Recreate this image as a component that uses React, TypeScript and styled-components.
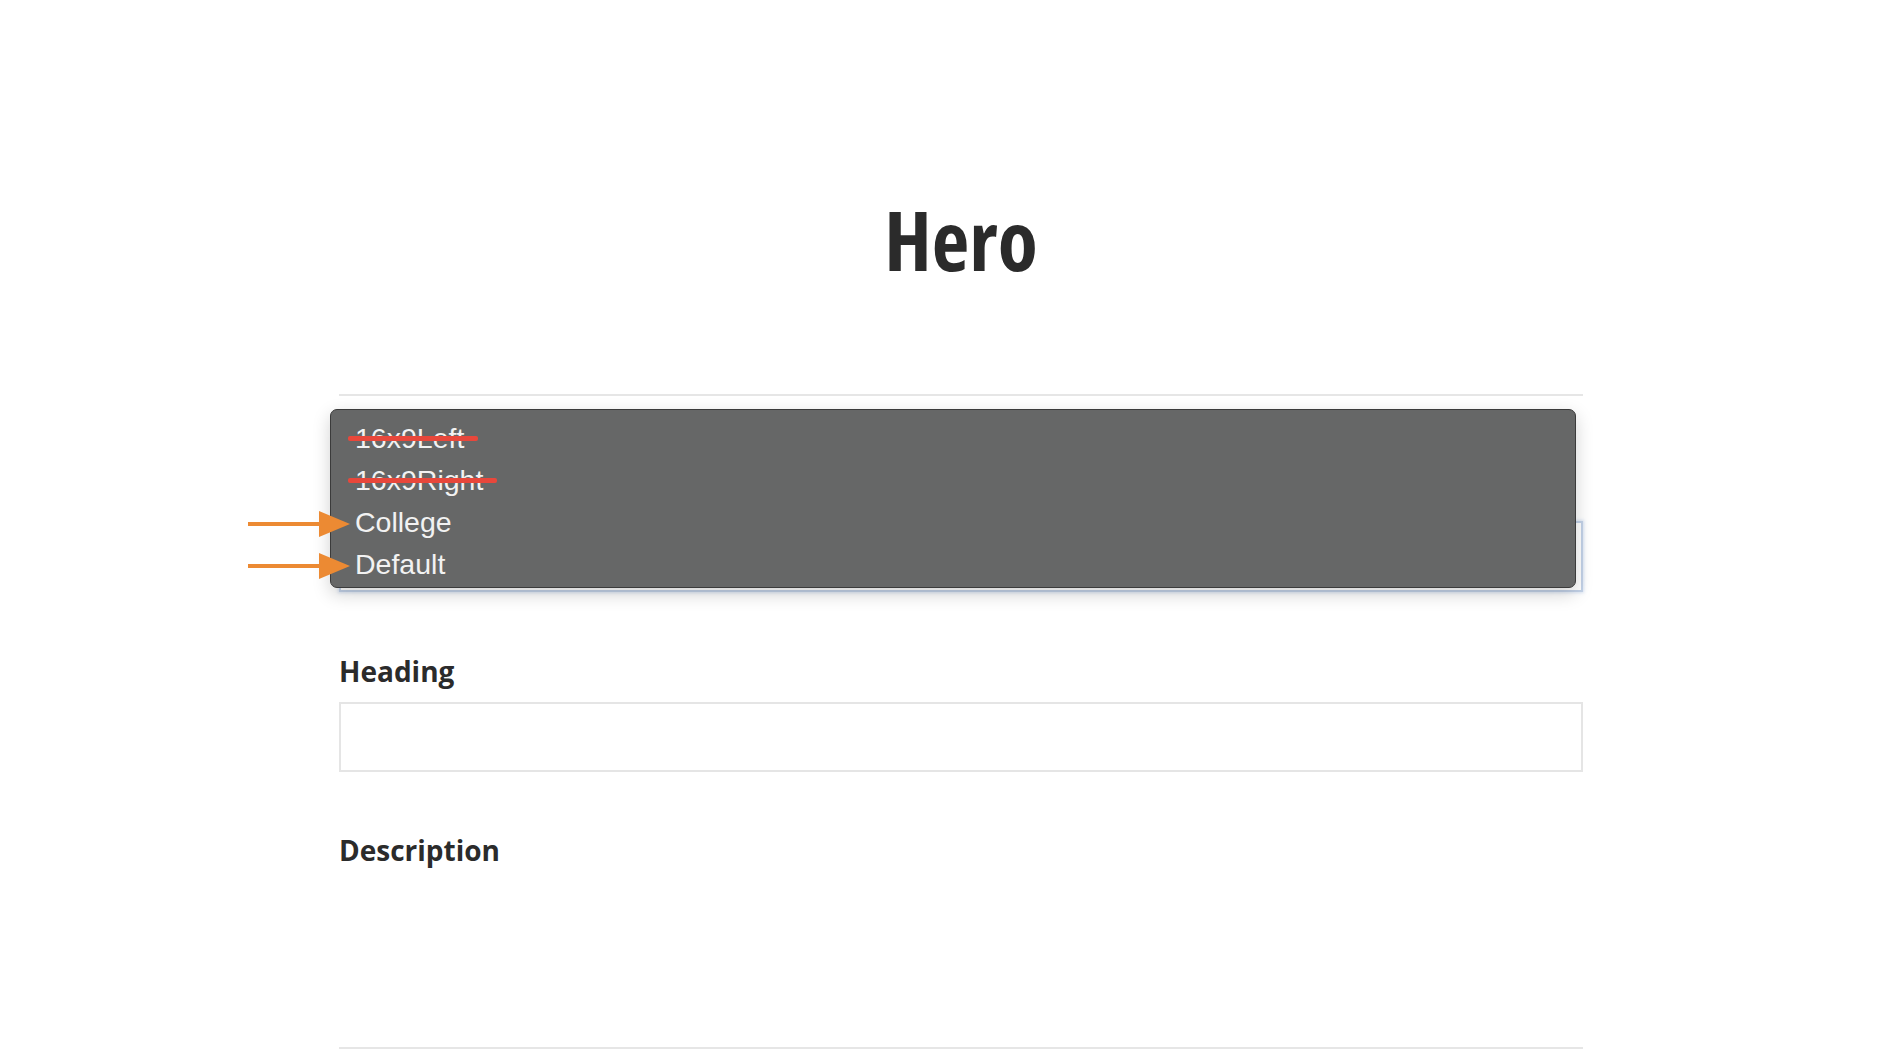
import React from "react";
import styled, { createGlobalStyle } from "styled-components";

const Global = createGlobalStyle`
  html, body { margin: 0; padding: 0; background: #ffffff; }
  body { font-family: "Open Sans", "Liberation Sans", sans-serif; color: #2b2b2b; }
`;

const Page = styled.div`
  padding: 0 313px 0 339px;
  display: flex;
  flex-direction: column;
`;

const Title = styled.h1`
  margin: 198px 0 0;
  height: 82px;
  font-family: "Open Sans", "DejaVu Sans Condensed", sans-serif;
  font-stretch: 75%;
  font-weight: 700;
  font-size: 82px;
  line-height: 1;
  text-align: center;
  color: #2b2b2b;
  letter-spacing: 0;
`;

const Rule = styled.hr<{ $top: number }>`
  margin: ${(p) => p.$top}px 0 0;
  border: none;
  height: 2px;
  background: #e6e6e6;
`;

const SelectField = styled.div`
  position: relative;
  margin-top: 125px;
  height: 71px;
  box-sizing: border-box;
  border: 2px solid #c3d2e8;
  box-shadow: 0 0 3px 1px rgba(170, 195, 230, 0.45);
  background: #fff;
`;

const Popup = styled.ul`
  position: absolute;
  top: -114px;
  left: -11px;
  width: 1246px;
  box-sizing: border-box;
  margin: 0;
  padding: 7px 0 2px;
  list-style: none;
  background: #666767;
  border: 1px solid #3b3b3b;
  border-radius: 7px;
  box-shadow: 0 6px 18px rgba(0, 0, 0, 0.18);
  z-index: 2;
`;

const Option = styled.li`
  position: relative;
  height: 42px;
  padding-left: 24px;
  font-family: "Liberation Sans", Arial, sans-serif;
  font-size: 28.5px;
  line-height: 42px;
  color: #f2f2f2;
`;

const Struck = styled.span<{ $extra: number }>`
  position: relative;
  &::after {
    content: "";
    position: absolute;
    left: -7px;
    right: ${(p) => -p.$extra}px;
    top: 14px;
    height: 5px;
    border-radius: 2px;
    background: #e8473b;
  }
`;

const Arrow = styled.svg`
  position: absolute;
  left: -83px;
  top: 10px;
`;

const Label = styled.label<{ $top: number }>`
  display: block;
  margin-top: ${(p) => p.$top}px;
  height: 28px;
  font-family: "Open Sans", sans-serif;
  font-weight: 700;
  font-size: 28px;
  line-height: 1;
  color: #2b2b2b;
`;

const TextInput = styled.input`
  margin-top: 17px;
  height: 70px;
  box-sizing: border-box;
  border: 2px solid #e5e5e5;
  background: #fff;
  outline: none;
  padding: 0 16px;
  font-size: 20px;
`;

const OrangeArrow = () => (
  <Arrow width="102" height="26" viewBox="0 0 102 26">
    <rect x="0" y="11" width="74" height="4" fill="#ec8a33" />
    <polygon points="71,0 102,13 71,26" fill="#ec8a33" />
  </Arrow>
);

export default function App() {
  return (
    <>
      <Global />
      <Page>
        <Title>Hero</Title>
        <Rule $top={114} />
        <SelectField>
          <Popup>
            <Option>
              <Struck $extra={14}>16x9Left</Struck>
            </Option>
            <Option>
              <Struck $extra={14}>16x9Right</Struck>
            </Option>
            <Option>
              <OrangeArrow />
              College
            </Option>
            <Option>
              <OrangeArrow />
              Default
            </Option>
          </Popup>
        </SelectField>
        <Label $top={65}>Heading</Label>
        <TextInput type="text" />
        <Label $top={64}>Description</Label>
        <Rule $top={183} />
      </Page>
    </>
  );
}
